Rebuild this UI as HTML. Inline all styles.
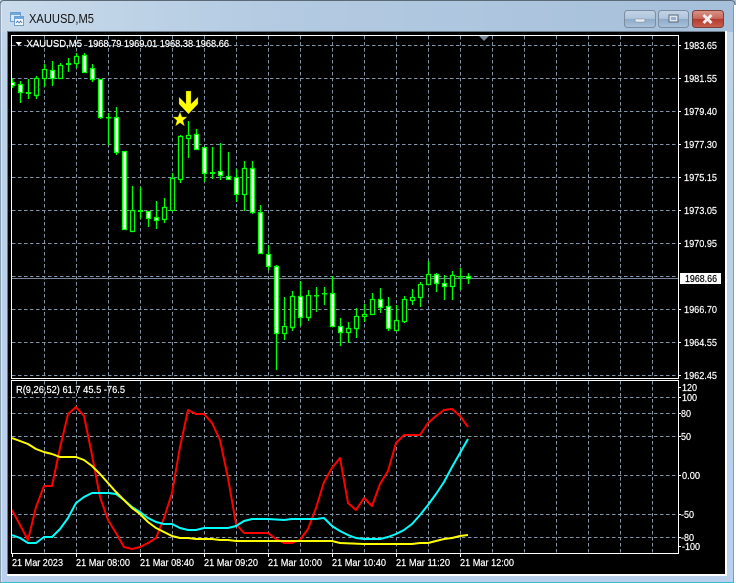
<!DOCTYPE html>
<html><head><meta charset="utf-8"><style>
html,body{margin:0;padding:0;width:736px;height:583px;overflow:hidden;background:#fff}
svg{display:block}
text{font-family:"Liberation Sans",sans-serif;font-size:10.5px;fill:#fff;stroke:#fff;stroke-width:.2px}
</style></head><body>
<svg width="736" height="583" viewBox="0 0 736 583" xmlns="http://www.w3.org/2000/svg">
<defs>
<linearGradient id="tb" x1="0" x2="1" y1="0" y2="0"><stop offset="0" stop-color="#c9dbeb"/><stop offset=".35" stop-color="#b4cbe2"/><stop offset="1" stop-color="#a6bfda"/></linearGradient>
<linearGradient id="sd" x1="0" x2="0" y1="0" y2="1"><stop offset="0" stop-color="#c4d7e9"/><stop offset=".2" stop-color="#bad1ea"/><stop offset="1" stop-color="#b9d1ec"/></linearGradient>
<linearGradient id="btn" x1="0" x2="0" y1="0" y2="1"><stop offset="0" stop-color="#c2d3e6"/><stop offset=".48" stop-color="#b0c5dc"/><stop offset=".5" stop-color="#8fabc9"/><stop offset="1" stop-color="#a9c2dc"/></linearGradient>
<linearGradient id="cl" x1="0" x2="0" y1="0" y2="1"><stop offset="0" stop-color="#d9958a"/><stop offset=".48" stop-color="#c9675a"/><stop offset=".5" stop-color="#b23a2c"/><stop offset="1" stop-color="#c9604f"/></linearGradient>
<clipPath id="p1"><rect x="12" y="36" width="666" height="342"/></clipPath>
<clipPath id="p2"><rect x="12" y="381" width="666" height="172"/></clipPath>
</defs>

<!-- window frame -->
<path d="M4 0.5H731Q735 0.5 735 5V583H0V5Q0 0.5 4 0.5Z" fill="url(#sd)"/>
<rect x="0" y="0" width="736" height="32" fill="url(#tb)"/>
<path d="M0 583V5Q0 .5 4 .5H731Q735 .5 735 5" fill="none" stroke="#5c6a78" stroke-width="1"/>
<rect x="1" y="582" width="734" height="1" fill="#3fb6d2"/>
<rect x="733" y="5" width="1" height="578" fill="#3fb6d2"/>
<rect x="734" y="5" width="2" height="578" fill="#fff"/>
<rect x="1" y="5" width="1" height="577" fill="#dbe7f3"/>

<!-- title icon -->
<rect x="10.5" y="12.5" width="10" height="9" fill="#dbeafa" stroke="#6f9fd0"/>
<rect x="11" y="13" width="9" height="2" fill="#6fa8e0"/>
<rect x="14.5" y="16.5" width="9" height="9" fill="#f2f7fc" stroke="#6f9fd0"/>
<rect x="15" y="17" width="8" height="2" fill="#6fa8e0"/>
<path d="M16 23l1.500-2 1.500 2 1.500-2 1.500 2" fill="none" stroke="#3d74b0" stroke-width=".8"/>
<text x="29" y="23" style="font-size:12.5px;fill:#111;stroke:none" textLength="65" lengthAdjust="spacingAndGlyphs">XAUUSD,M5</text>

<!-- title buttons -->
<rect x="624.500" y="10.500" width="31" height="17" rx="3" fill="url(#btn)" stroke="#7c8da0"/>
<rect x="635" y="19" width="10" height="3" rx="1" fill="#e9eef4" stroke="#7c8796" stroke-width=".6"/>
<rect x="658.500" y="10.500" width="30" height="17" rx="3" fill="url(#btn)" stroke="#7c8da0"/>
<rect x="669" y="15" width="9" height="7" fill="#dfe7f0" stroke="#5b6778" stroke-width="1"/>
<rect x="671" y="17" width="5" height="3" fill="#97aec8"/>
<rect x="692.500" y="10.500" width="31" height="17" rx="3" fill="url(#cl)" stroke="#7c4038"/>
<path d="M703.500 15l8 8M711.500 15l-8 8" stroke="#f2eeee" stroke-width="3"/>

<!-- client area -->
<rect x="7" y="31" width="720" height="545" fill="#fff"/>
<rect x="7" y="31" width="718" height="1" fill="#6c7a88"/>
<rect x="7" y="31" width="1" height="543" fill="#6c7a88"/>
<rect x="8" y="32" width="717" height="542" fill="#000"/>

<!-- grid -->
<g stroke="#8394a6" stroke-width="1" stroke-dasharray="3.500 2.500" fill="none">
<path d="M12 45.500H678M12 78.500H678M12 111.500H678M12 144.500H678M12 177.500H678M12 210.500H678M12 243.500H678M12 276.500H678M12 309.500H678M12 342.500H678M12 375.500H678"/>
<path d="M44.500 36V378M76.500 36V378M108.500 36V378M140.500 36V378M172.500 36V378M204.500 36V378M236.500 36V378M268.500 36V378M300.500 36V378M332.500 36V378M364.500 36V378M396.500 36V378M428.500 36V378M460.500 36V378M492.500 36V378M524.500 36V378M556.500 36V378M588.500 36V378M620.500 36V378M652.500 36V378"/>
<path d="M12 397.500H678M12 413.500H678M12 436.500H678M12 475.500H678M12 514.500H678M12 537.500H678"/>
<path d="M44.500 381V553M76.500 381V553M108.500 381V553M140.500 381V553M172.500 381V553M204.500 381V553M236.500 381V553M268.500 381V553M300.500 381V553M332.500 381V553M364.500 381V553M396.500 381V553M428.500 381V553M460.500 381V553M492.500 381V553M524.500 381V553M556.500 381V553M588.500 381V553M620.500 381V553M652.500 381V553"/>
</g>
<rect x="12" y="278" width="666" height="1" fill="#778899"/>

<!-- candles -->
<g clip-path="url(#p1)" stroke-width="1.300">
<path stroke="#00ff00" fill="none" d="M12.500 79V88M20.500 81V103M28.500 79V99M36.500 76V99M44.500 64V87M52.500 61V86M60.500 63V79M68.500 58V72M76.500 53V68M84.500 53V72M92.500 64V82M100.500 79V119M108.500 113V145M116.500 107V155M124.500 151V229M132.500 186V232M140.500 187V219M148.500 211V227M156.500 201V229M164.500 198V223M172.500 173V210M180.500 135V183M188.500 121V158M196.500 129V150M204.500 147V182M212.500 147V179M220.500 143V180M228.500 152V180M236.500 169V202M244.500 161V211M252.500 161V214M260.500 205V253M268.500 245V270M276.500 265V370M284.500 297V340M292.500 291V331M300.500 281V326M308.500 290V321M316.500 287V312M324.500 287V305M332.500 276V326M340.500 318V346M348.500 322V343M356.500 308V338M364.500 304V322M372.500 293V315M380.500 288V313M388.500 297V331M396.500 305V331M404.500 296V323M412.500 289V305M420.500 282V307M428.500 261V285M436.500 273V292M444.500 275V300M452.500 271V300M460.500 268V290M468.500 273V284"/>
<path stroke="#00ff00" fill="#000" d="M34.500 78.500h4v17h-4zM42.500 69.500h4v9h-4zM58.500 65.500h4v13h-4zM74.500 56.500h4v7h-4zM130.500 210.500h4v21h-4zM162.500 207.500h4v12h-4zM170.500 178.500h4v32h-4zM178.500 136.500h4v43h-4zM186.500 135.500h4v3h-4zM242.500 168.500h4v26h-4zM282.500 326.500h4v7h-4zM290.500 296.500h4v31h-4zM306.500 295.500h4v22h-4zM346.500 328.500h4v4h-4zM354.500 316.500h4v12h-4zM362.500 314.500h4v2h-4zM370.500 299.500h4v15h-4zM394.500 320.500h4v10h-4zM402.500 299.500h4v22h-4zM410.500 297.500h4v3h-4zM418.500 284.500h4v13h-4zM426.500 274.500h4v10h-4zM450.500 275.500h4v11h-4z"/>
<path stroke="#00ff00" fill="#fff" d="M10.500 82.500h4v3h-4zM18.500 84.500h4v8h-4zM50.500 70.500h4v8h-4zM82.500 55.500h4v17h-4zM90.500 68.500h4v11h-4zM98.500 79.500h4v38h-4zM114.500 117.500h4v35h-4zM122.500 151.500h4v78h-4zM146.500 211.500h4v7h-4zM154.500 217.500h4v3h-4zM194.500 134.500h4v15h-4zM202.500 147.500h4v26h-4zM218.500 171.500h4v4h-4zM226.500 176.500h4v3h-4zM234.500 177.500h4v17h-4zM250.500 168.500h4v44h-4zM258.500 212.500h4v41h-4zM266.500 254.500h4v12h-4zM274.500 266.500h4v67h-4zM298.500 296.500h4v21h-4zM330.500 293.500h4v33h-4zM338.500 326.500h4v6h-4zM378.500 299.500h4v8h-4zM386.500 306.500h4v22h-4zM434.500 274.500h4v9h-4zM442.500 283.500h4v3h-4zM466.500 276.500h4v2h-4z"/>
<path fill="#00ff00" stroke="none" d="M26 92h5v2h-5zM66 63h5v2h-5zM106 117h5v1.500h-5zM138 210h5v2h-5zM210 172h5v2h-5zM314 295h5v1.500h-5zM322 293h5v1.500h-5zM458 276h5v1.500h-5z"/>
</g>

<!-- arrow and star -->
<polygon points="186,91 191,91 191,104 198,97 198,104 188.500,114 179,104 179,97 186,104" fill="#ffff00" stroke="#6a6a00" stroke-width=".3"/>
<polygon points="180,112 181.900,117 187,117 183,120.500 184.500,126 180,122.800 175.500,126 177,120.500 173,117 178.100,117" fill="#ffff00" stroke="#8a8a00" stroke-width=".4"/>

<!-- oscillator -->
<g clip-path="url(#p2)" fill="none" stroke-width="2" stroke-linejoin="round">
<polyline stroke="#ff0000" points="12,510 28,540 36,507 44,486 52,486 60,448 68,414 76,407 84,416 92,455 100,497 108,520 116,533 124,547 132,549 140,547 148,543 156,538 164,518 172,493 180,447 188,410 196,414 204,414 212,423 220,440 228,478 236,524 244,533 252,533 260,533 268,533 276,539 284,543 292,543 300,540 308,529 316,508 324,482 332,468 340,458 348,503 356,510 364,498 372,506 380,484 388,471 396,443 404,435 412,435 420,435 428,423 436,416 444,410 452,409 460,416 468,427"/>
<polyline stroke="#00ffff" points="12,535 20,538 28,543 36,543 44,537 52,537 60,529 68,518 76,503 84,497 92,493 100,493 108,493 116,494 124,500 132,507 140,512 148,518 156,522 164,524 172,524 180,528 188,530 196,530 204,528 212,528 220,528 228,528 236,526 244,521 252,519 260,519 268,519 284,520 292,519 308,519 316,519 324,518 332,526 340,531 348,535 356,538 364,539 372,539 380,539 388,537 396,534 404,530 412,524 420,515 428,505 436,494 444,482 452,467 460,453 468,439"/>
<polyline stroke="#ffff00" points="12,438 20,441 28,444 36,449 44,452 52,454 60,457 68,457 76,457 84,460 92,466 100,474 108,483 116,492 124,500 132,508 140,514 148,522 156,528 164,532 172,536 180,538 188,538 196,539 204,539 212,539 220,540 228,540 236,541 332,541 340,543 364,544 412,544 420,543 428,543 436,541 444,539 452,538 460,536 468,535"/>
</g>

<!-- pane borders -->
<g shape-rendering="crispEdges" fill="#fff">
<rect x="11" y="35" width="668" height="1"/>
<rect x="11" y="35" width="1" height="344"/>
<rect x="678" y="35" width="1" height="344"/>
<rect x="11" y="378" width="668" height="1"/>
<rect x="11" y="380" width="668" height="1"/>
<rect x="11" y="380" width="1" height="174"/>
<rect x="678" y="380" width="1" height="174"/>
<rect x="11" y="553" width="668" height="1"/>
<path d="M679 45h2v1h-2zM679 78h2v1h-2zM679 111h2v1h-2zM679 144h2v1h-2zM679 177h2v1h-2zM679 210h2v1h-2zM679 243h2v1h-2zM679 309h2v1h-2zM679 342h2v1h-2zM679 375h2v1h-2zM679 387h2v1h-2zM679 397h2v1h-2zM679 413h2v1h-2zM679 436h2v1h-2zM679 475h2v1h-2zM679 514h2v1h-2zM679 537h2v1h-2zM679 546h2v1h-2z"/>
<path d="M12 554h1v3h-1zM76 554h1v3h-1zM140 554h1v3h-1zM204 554h1v3h-1zM268 554h1v3h-1zM332 554h1v3h-1zM396 554h1v3h-1zM460 554h1v3h-1z"/>
</g>
<polygon points="479,36 489,36 484,41" fill="#778899"/>
<polygon points="15.500,42 22,42 18.750,45.500" fill="#fff"/>

<!-- header text -->
<text x="26.500" y="47" textLength="55.500" lengthAdjust="spacingAndGlyphs">XAUUSD,M5</text>
<text x="88" y="47" textLength="141" lengthAdjust="spacingAndGlyphs">1968.79 1969.01 1968.38 1968.66</text>
<text x="16" y="393" textLength="109" lengthAdjust="spacingAndGlyphs">R(9,26,52) 61.7 45.5 -76.5</text>

<!-- price labels -->
<g>
<text x="684" y="49" textLength="33" lengthAdjust="spacingAndGlyphs">1983.65</text>
<text x="684" y="82" textLength="33" lengthAdjust="spacingAndGlyphs">1981.55</text>
<text x="684" y="115" textLength="33" lengthAdjust="spacingAndGlyphs">1979.40</text>
<text x="684" y="148" textLength="33" lengthAdjust="spacingAndGlyphs">1977.30</text>
<text x="684" y="181" textLength="33" lengthAdjust="spacingAndGlyphs">1975.15</text>
<text x="684" y="214" textLength="33" lengthAdjust="spacingAndGlyphs">1973.05</text>
<text x="684" y="247" textLength="33" lengthAdjust="spacingAndGlyphs">1970.95</text>
<rect x="680" y="273" width="41" height="11" fill="#fff"/>
<text x="685" y="282" textLength="32" lengthAdjust="spacingAndGlyphs" style="fill:#000;stroke:#000">1968.66</text>
<text x="684" y="313" textLength="33" lengthAdjust="spacingAndGlyphs">1966.70</text>
<text x="684" y="346" textLength="33" lengthAdjust="spacingAndGlyphs">1964.55</text>
<text x="684" y="379" textLength="33" lengthAdjust="spacingAndGlyphs">1962.45</text>
<text x="682" y="391" textLength="15" lengthAdjust="spacingAndGlyphs">120</text>
<text x="682" y="401" textLength="15" lengthAdjust="spacingAndGlyphs">100</text>
<text x="681" y="417" textLength="10" lengthAdjust="spacingAndGlyphs">80</text>
<text x="681" y="440" textLength="10" lengthAdjust="spacingAndGlyphs">50</text>
<text x="682" y="479" textLength="18" lengthAdjust="spacingAndGlyphs">0.00</text>
<text x="681" y="518" textLength="13" lengthAdjust="spacingAndGlyphs">-50</text>
<text x="681" y="541" textLength="13" lengthAdjust="spacingAndGlyphs">-80</text>
<text x="682" y="550" textLength="18" lengthAdjust="spacingAndGlyphs">-100</text>
</g>

<!-- time labels -->
<g>
<text x="12" y="566" textLength="51" lengthAdjust="spacingAndGlyphs">21 Mar 2023</text>
<text x="76" y="566" textLength="54" lengthAdjust="spacingAndGlyphs">21 Mar 08:00</text>
<text x="140" y="566" textLength="54" lengthAdjust="spacingAndGlyphs">21 Mar 08:40</text>
<text x="204" y="566" textLength="54" lengthAdjust="spacingAndGlyphs">21 Mar 09:20</text>
<text x="268" y="566" textLength="54" lengthAdjust="spacingAndGlyphs">21 Mar 10:00</text>
<text x="332" y="566" textLength="54" lengthAdjust="spacingAndGlyphs">21 Mar 10:40</text>
<text x="396" y="566" textLength="54" lengthAdjust="spacingAndGlyphs">21 Mar 11:20</text>
<text x="460" y="566" textLength="54" lengthAdjust="spacingAndGlyphs">21 Mar 12:00</text>
</g>
</svg>
</body></html>
